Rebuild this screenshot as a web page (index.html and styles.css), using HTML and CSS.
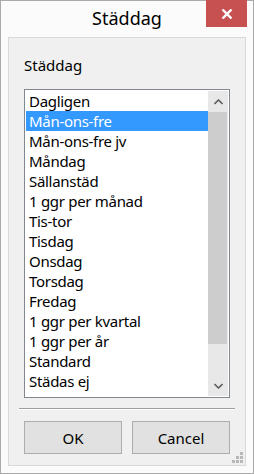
FILE: index.html
```html
<!DOCTYPE html>
<html lang="sv">
<head>
    <meta charset="UTF-8">
    <meta name="viewport" content="width=device-width, initial-scale=1.0">
    <title>Städdag</title>
    <link rel="stylesheet" href="styles.css">
</head>
<body>
    <div class="window">
        <div class="titlebar">
            <span class="title">Städdag</span>
            <div class="close">
                <svg width="12" height="10" viewBox="0 0 12 10">
                    <path d="M1.5 0.5 L10.5 9.5 M10.5 0.5 L1.5 9.5" stroke="#fff" stroke-width="2.4" fill="none"/>
                </svg>
            </div>
        </div>
        <div class="panel">
            <div class="label">Städdag</div>
            <div class="listbox">
                <ul class="items">
                    <li>Dagligen</li>
                    <li class="selected">Mån-ons-fre</li>
                    <li>Mån-ons-fre jv</li>
                    <li>Måndag</li>
                    <li>Sällanstäd</li>
                    <li>1 ggr per månad</li>
                    <li>Tis-tor</li>
                    <li>Tisdag</li>
                    <li>Onsdag</li>
                    <li>Torsdag</li>
                    <li>Fredag</li>
                    <li>1 ggr per kvartal</li>
                    <li>1 ggr per år</li>
                    <li>Standard</li>
                    <li>Städas ej</li>
                </ul>
                <div class="scrollbar">
                    <div class="arrow">
                        <svg width="9" height="6" viewBox="0 0 9 6"><path d="M0.5 5 L4.5 1 L8.5 5" stroke="#606060" stroke-width="1.6" fill="none"/></svg>
                    </div>
                    <div class="track">
                        <div class="thumb"></div>
                    </div>
                    <div class="arrow">
                        <svg width="9" height="6" viewBox="0 0 9 6"><path d="M0.5 1 L4.5 5 L8.5 1" stroke="#606060" stroke-width="1.6" fill="none"/></svg>
                    </div>
                </div>
            </div>
            <div class="separator"></div>
            <div class="buttons">
                <button class="btn">OK</button>
                <button class="btn">Cancel</button>
            </div>
            <div class="grip">
                <svg width="11" height="11" viewBox="0 0 11 11" fill="#b8b8b8">
                    <rect x="8" y="0" width="3" height="3"/>
                    <rect x="4" y="4" width="3" height="3"/>
                    <rect x="8" y="4" width="3" height="3"/>
                    <rect x="0" y="8" width="3" height="3"/>
                    <rect x="4" y="8" width="3" height="3"/>
                    <rect x="8" y="8" width="3" height="3"/>
                </svg>
            </div>
        </div>
    </div>
</body>
</html>
```

FILE: styles.css
```css
body {
    margin: 0;
    font-family: "Noto Sans", "Open Sans", sans-serif;
    color: #000;
}
.window {
    width: 254px;
    height: 474px;
    box-sizing: border-box;
    border: 1px solid #aaaaaa;
    background-color: #fbfbfb;
    display: flex;
    flex-direction: column;
}
.titlebar {
    position: relative;
    height: 36px;
    display: flex;
    justify-content: center;
    align-items: center;
}
.title {
    font-size: 18px;
    color: #000;
    margin-top: -2px;
}
.close {
    position: absolute;
    top: -1px;
    right: 6px;
    width: 41px;
    height: 27px;
    background-color: #c75050;
    display: flex;
    justify-content: center;
    align-items: center;
}
.panel {
    position: relative;
    flex: 1;
    margin: 0 7px 7px 7px;
    border: 1px solid #d9d9d9;
    background-color: #f0f0f0;
    padding: 17px 15px 0 15px;
}
.label {
    font-size: 15px;
    line-height: 20px;
    height: 20px;
    margin-bottom: 14px;
}
.listbox {
    display: flex;
    width: 206px;
    height: 309px;
    box-sizing: border-box;
    border: 1px solid #828790;
    background-color: #fff;
    padding: 1px;
}
.items {
    list-style: none;
    margin: 0;
    padding: 0;
    flex: 1;
    font-size: 15px;
    letter-spacing: -0.3px;
}
.items li {
    height: 20px;
    line-height: 20px;
    padding-left: 3px;
    white-space: nowrap;
}
.items li.selected {
    background-color: #3399ff;
    color: #fff;
}
.scrollbar {
    width: 20px;
    display: flex;
    flex-direction: column;
    background-color: #e8e8e8;
}
.arrow {
    height: 21px;
    display: flex;
    justify-content: center;
    align-items: center;
}
.track {
    flex: 1;
    padding-right: 1px;
}
.thumb {
    height: 232px;
    background-color: #cdcdcd;
}
.separator {
    margin: 10px -5px 0 -5px;
    border-top: 1px solid #a0a0a0;
    border-bottom: 1px solid #ffffff;
}
.buttons {
    display: flex;
    gap: 10px;
    margin-top: 11px;
}
.btn {
    width: 98px;
    height: 33px;
    border: 1px solid #adadad;
    background-color: #e1e1e1;
    font-family: "Noto Sans", "Open Sans", sans-serif;
    font-size: 15px;
    color: #000;
    padding: 0;
}
.grip {
    position: absolute;
    right: 2px;
    bottom: 2px;
    width: 11px;
    height: 11px;
}
.grip svg {
    display: block;
}
```
